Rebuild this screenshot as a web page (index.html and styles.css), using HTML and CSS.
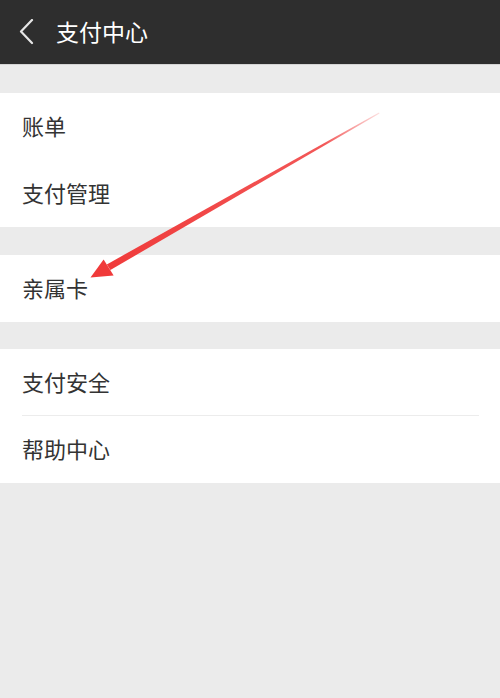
FILE: index.html
```html
<!DOCTYPE html>
<html lang="zh-CN">
<head>
<meta charset="utf-8">
<title>支付中心</title>
<link rel="stylesheet" href="styles.css">
</head>
<body>
<div class="page">
  <header class="topbar">
    <svg class="back" width="16" height="26" viewBox="0 0 16 26"><path d="M13 1 L2 12.5 L13 24" fill="none" stroke="#e6e6e6" stroke-width="2.2" stroke-linecap="round" stroke-linejoin="round"/></svg>
    <h1 class="title">支付中心</h1>
  </header>
  <section class="group">
    <div class="row">账单</div>
    <div class="row">支付管理</div>
  </section>
  <section class="group short-gap">
    <div class="row">亲属卡</div>
  </section>
  <section class="group">
    <div class="row divided">支付安全</div>
    <div class="row">帮助中心</div>
  </section>
  <svg class="annot" width="500" height="698" viewBox="0 0 500 698">
    <defs>
      <linearGradient id="fade" gradientUnits="userSpaceOnUse" x1="380" y1="112" x2="100" y2="270">
        <stop offset="0" stop-color="#f03a3a" stop-opacity="0.15"/>
        <stop offset="0.2" stop-color="#f03a3a" stop-opacity="0.85"/>
        <stop offset="1" stop-color="#f03a3a" stop-opacity="1"/>
      </linearGradient>
    </defs>
    <polygon points="379,112.4 379.5,113.4 110.4,270 106.8,264.4" fill="url(#fade)"/>
    <polygon points="90.5,277.5 103.6,259.4 113.6,275.6" fill="#f03a3a"/>
  </svg>
</div>
</body>
</html>
```
FILE: styles.css
```css
html, body {
  margin: 0;
  padding: 0;
  background: #ebebeb;
}
body {
  font-family: "Noto Sans CJK SC", "Noto Sans", sans-serif;
}
.page {
  position: relative;
  width: 500px;
  height: 698px;
  overflow: hidden;
  background: #ebebeb;
}
.topbar {
  height: 65px;
  background: #2e2e2e;
  display: flex;
  align-items: center;
  padding-left: 19px;
  padding-bottom: 1px;
  box-sizing: border-box;
  border-bottom: 1px solid #d4d4d4;
  margin-bottom: 28px;
}
.back {
  display: block;
  margin-right: 21px;
}
.title {
  margin: 0;
  font-size: 23px;
  font-weight: 400;
  color: #ffffff;
  line-height: 1;
}
.group {
  background: #ffffff;
  padding: 0 21px 0 22px;
  margin-bottom: 28px;
}
.group.short-gap {
  margin-bottom: 27px;
}
.row {
  height: 67px;
  display: flex;
  align-items: center;
  font-size: 22px;
  line-height: 1;
  color: #333333;
  box-sizing: border-box;
  padding-bottom: 3px;
}
.row.divided {
  border-bottom: 1px solid #ececec;
}
.annot {
  position: absolute;
  left: 0;
  top: 0;
  pointer-events: none;
}
```
